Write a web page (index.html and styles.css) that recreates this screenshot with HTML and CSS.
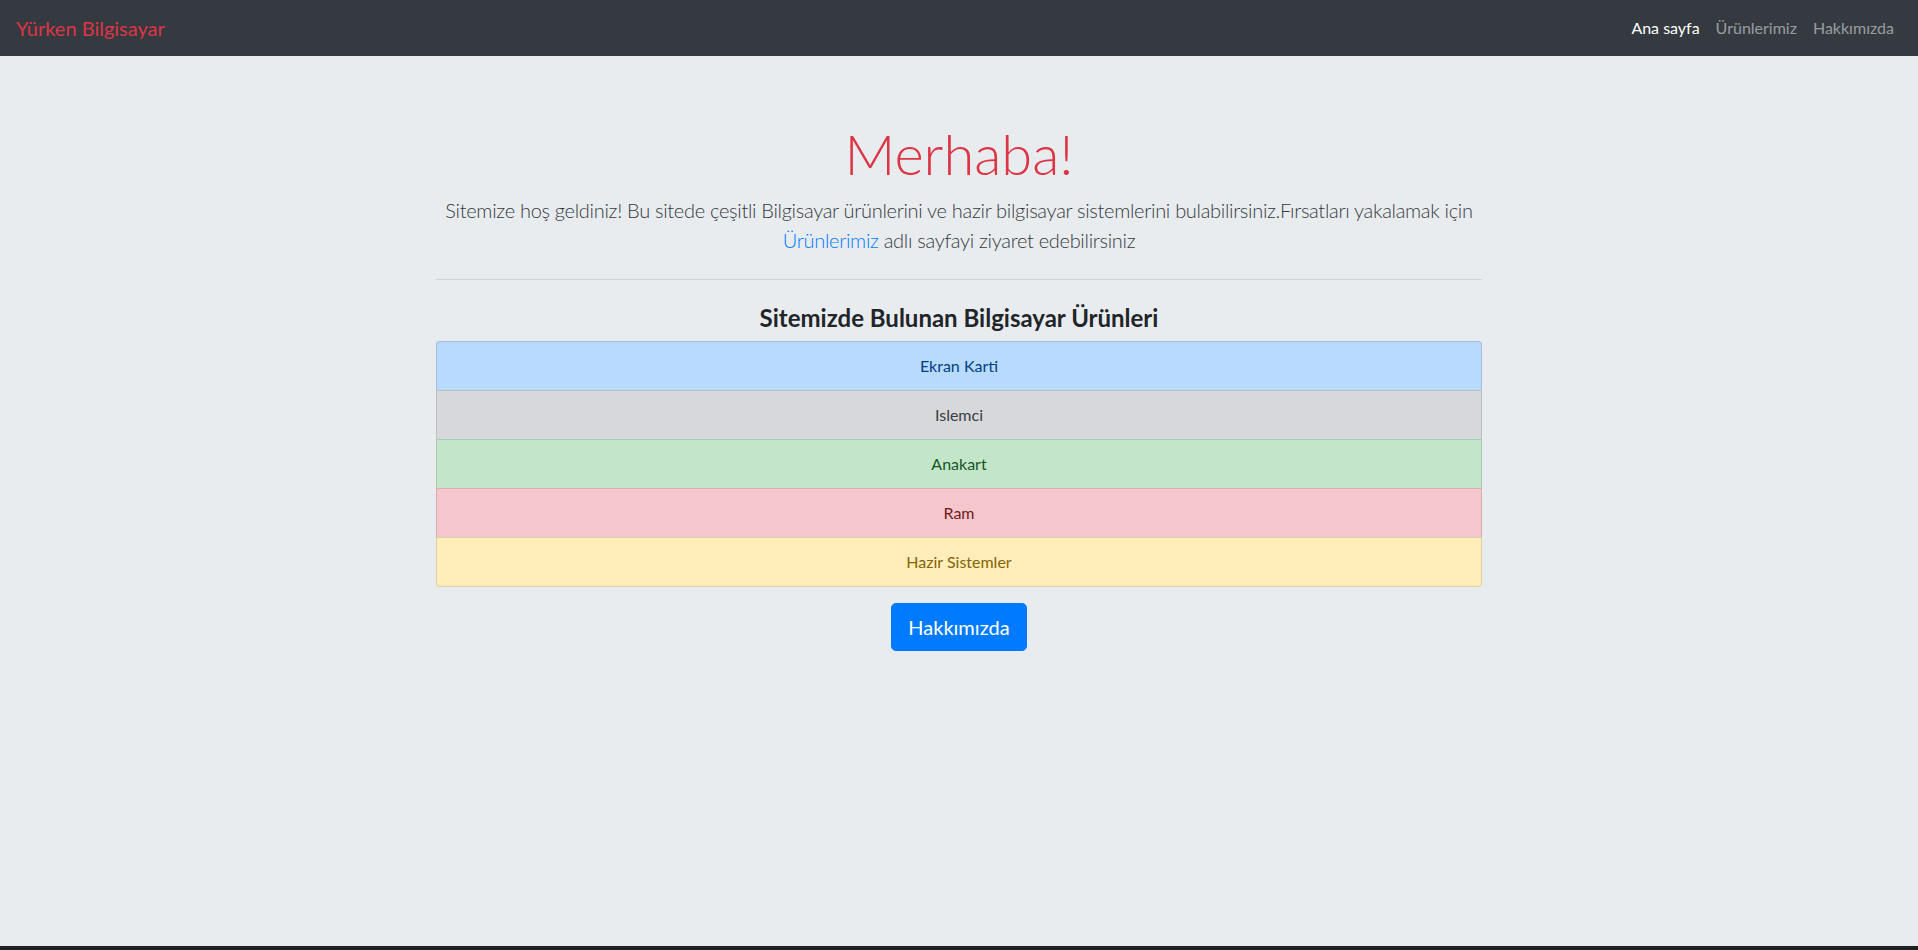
FILE: index.html
```html
<!DOCTYPE html>
<html lang="tr">
<head>
<meta charset="utf-8">
<title>Yürken Bilgisayar</title>
<link rel="stylesheet" href="styles.css">
</head>
<body>
<nav class="navbar">
  <a class="brand" href="#">Yürken Bilgisayar</a>
  <ul class="nav-links">
    <li><a class="nav-link active" href="#">Ana sayfa</a></li>
    <li><a class="nav-link" href="#">Ürünlerimiz</a></li>
    <li><a class="nav-link" href="#">Hakkımızda</a></li>
  </ul>
</nav>
<main class="page">
  <div class="container">
    <section class="jumbotron">
      <h1 class="display">Merhaba!</h1>
      <p class="lead">Sitemize hoş geldiniz! Bu sitede çeşitli Bilgisayar ürünlerini ve hazir bilgisayar sistemlerini bulabilirsiniz.Fırsatları yakalamak için <a class="link" href="#">Ürünlerimiz</a> adlı sayfayi ziyaret edebilirsiniz</p>
      <hr class="divider">
      <h4 class="section-title">Sitemizde Bulunan Bilgisayar Ürünleri</h4>
      <ul class="list-group">
        <li class="list-item item-primary">Ekran Karti</li>
        <li class="list-item item-secondary">Islemci</li>
        <li class="list-item item-success">Anakart</li>
        <li class="list-item item-danger">Ram</li>
        <li class="list-item item-warning">Hazir Sistemler</li>
      </ul>
      <div class="actions">
        <a class="btn" href="#">Hakkımızda</a>
      </div>
    </section>
  </div>
</main>
<div class="taskbar"></div>
</body>
</html>
```
FILE: styles.css
```css
* { box-sizing: border-box; }
html, body { height: 100%; }
body {
  margin: 0;
  font-family: Lato, "Open Sans", sans-serif;
  font-size: 16px;
  line-height: 1.5;
  color: #212529;
  background: #e9ecef;
  display: flex;
  flex-direction: column;
  min-height: 100vh;
}
a { text-decoration: none; }

.navbar {
  background: #343a40;
  padding: 8px 16px;
  display: flex;
  align-items: center;
  justify-content: space-between;
  height: 56px;
}
.brand {
  color: #dc3545;
  font-size: 20px;
  line-height: 30px;
  padding: 5px 0;
}
.nav-links {
  list-style: none;
  margin: 0;
  padding: 0;
  display: flex;
}
.nav-link {
  display: block;
  padding: 8px;
  line-height: 24px;
  color: rgba(255,255,255,.5);
}
.nav-link.active { color: #fff; }

.page { flex: 1; }
.container {
  width: 1140px;
  margin: 0 auto;
  padding: 0 15px;
}
.jumbotron {
  padding: 64px 32px;
  text-align: center;
}
.display {
  margin: 0 0 8px;
  font-size: 56px;
  font-weight: 300;
  line-height: 1.2;
  color: #dc3545;
}
.lead {
  margin: 0 0 16px;
  font-size: 20px;
  font-weight: 300;
  line-height: 30px;
  letter-spacing: -0.3px;
  color: #343a40;
}
.link { color: #007bff; }
.divider {
  margin: 24px 0;
  border: 0;
  border-top: 1px solid rgba(0,0,0,.1);
}
.section-title {
  margin: 0 0 8px;
  font-size: 24px;
  font-weight: 700;
  line-height: 1.2;
}
.list-group {
  list-style: none;
  margin: 0;
  padding: 0;
  display: flex;
  flex-direction: column;
}
.list-item {
  padding: 12px 20px;
  border: 1px solid rgba(0,0,0,.125);
  margin-bottom: -1px;
  line-height: 24px;
}
.list-item:first-child { border-radius: 4px 4px 0 0; }
.list-item:last-child { border-radius: 0 0 4px 4px; margin-bottom: 0; }
.item-primary { background: #b8daff; color: #004085; }
.item-secondary { background: #d6d8db; color: #383d41; }
.item-success { background: #c3e6cb; color: #155724; }
.item-danger { background: #f5c6cb; color: #721c24; }
.item-warning { background: #ffeeba; color: #856404; }

.actions {
  margin-top: 16px;
  display: flex;
  justify-content: center;
}
.btn {
  display: inline-block;
  background: #007bff;
  color: #fff;
  border: 1px solid #007bff;
  border-radius: 4.8px;
  padding: 8px 16px;
  font-size: 20px;
  line-height: 30px;
}
.taskbar {
  height: 4px;
  background: #202124;
}
```
